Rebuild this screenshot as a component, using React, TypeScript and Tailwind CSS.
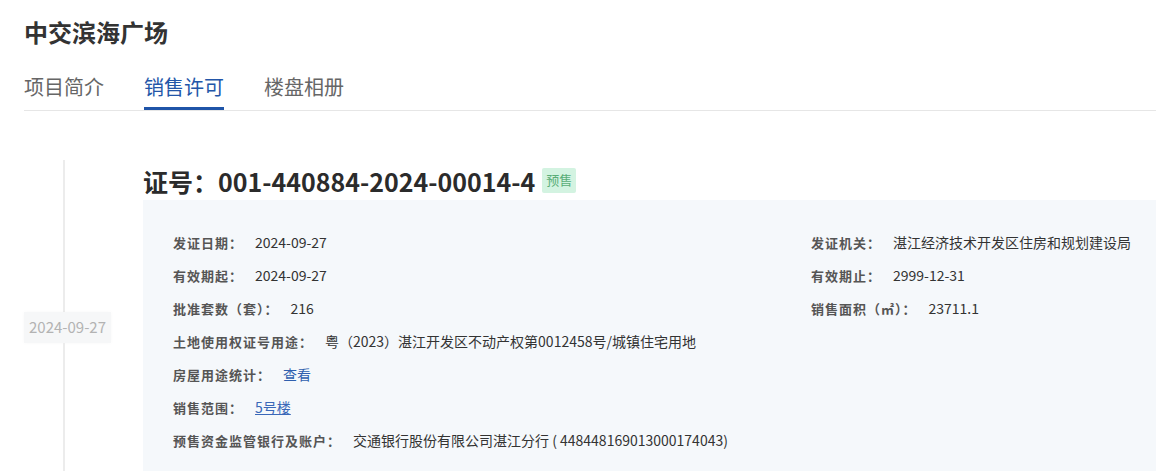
import React from "react";

const font = { fontFamily: '"Noto Sans CJK SC", "Noto Sans", sans-serif' };

const Label = ({ children }: { children: React.ReactNode }) => (
  <span className="mr-[12px] shrink-0 text-[13px] font-bold tracking-[1px] text-[#555]">
    {children}
  </span>
);

const Field = ({
  label,
  children,
}: {
  label: string;
  children: React.ReactNode;
}) => (
  <div className="flex h-[33px] items-center">
    <Label>{label}</Label>
    <span className="text-[14px] text-[#333]">{children}</span>
  </div>
);

const App = () => {
  const tabs = ["项目简介", "销售许可", "楼盘相册"];
  const active = 1;

  return (
    <div className="min-h-screen bg-white pl-[24px]" style={font}>
      {/* title */}
      <h1 className="pt-[16px] text-[24px] font-bold leading-[32px] text-[#333]">
        中交滨海广场
      </h1>

      {/* tabs */}
      <div className="mt-[24px] flex gap-10 border-b border-[#e6e6e6]">
        {tabs.map((t, i) => (
          <div
            key={t}
            className={`border-b-[3px] pb-[5px] text-[20px] leading-[30px] ${
              i === active
                ? "border-[#1f54a8] text-[#2356a8]"
                : "border-transparent text-[#666]"
            }`}
          >
            {t}
          </div>
        ))}
      </div>

      {/* timeline */}
      <div className="mt-[49px] flex">
        <div className="flex w-[119px] shrink-0 flex-col">
          <div className="ml-[39px] h-[152px] w-[2px] bg-[#ececec]" />
          <div className="flex h-[31px] w-[87px] items-center justify-center bg-[#f6f7f8] text-[15px] text-[#b3b3b3] shadow-[0_0_4px_rgba(0,0,0,0.03)]">
            2024-09-27
          </div>
          <div className="ml-[39px] w-[2px] flex-1 bg-[#ececec]" />
        </div>

        <div className="flex-1">
          <div className="mt-[4px] flex h-[36px] items-center">
            <span className="text-[25px] font-bold text-[#2b2b2b]">
              证号：001-440884-2024-00014-4
            </span>
            <span className="mb-[4px] ml-[7px] flex h-[25px] items-center rounded-[2px] bg-[#d3f3e1] px-[4px] text-[13px] text-[#5aae78]">
              预售
            </span>
          </div>

          <div className="bg-[#f5f8fb] pb-[30px] pl-[30px] pt-[26px]">
            <div className="grid grid-cols-[638px_1fr]">
              <Field label="发证日期：">2024-09-27</Field>
              <Field label="发证机关：">湛江经济技术开发区住房和规划建设局</Field>
              <Field label="有效期起：">2024-09-27</Field>
              <Field label="有效期止：">2999-12-31</Field>
              <Field label="批准套数（套）：">216</Field>
              <Field label="销售面积（㎡）：">23711.1</Field>
            </div>
            <Field label="土地使用权证号用途：">
              粤（2023）湛江开发区不动产权第0012458号/城镇住宅用地
            </Field>
            <Field label="房屋用途统计：">
              <a className="cursor-pointer text-[#2f5fae]">查看</a>
            </Field>
            <Field label="销售范围：">
              <a className="cursor-pointer text-[#3a68b8] underline">5号楼</a>
            </Field>
            <Field label="预售资金监管银行及账户：">
              交通银行股份有限公司湛江分行 ( 448448169013000174043)
            </Field>
          </div>
        </div>
      </div>
    </div>
  );
};

export default App;
